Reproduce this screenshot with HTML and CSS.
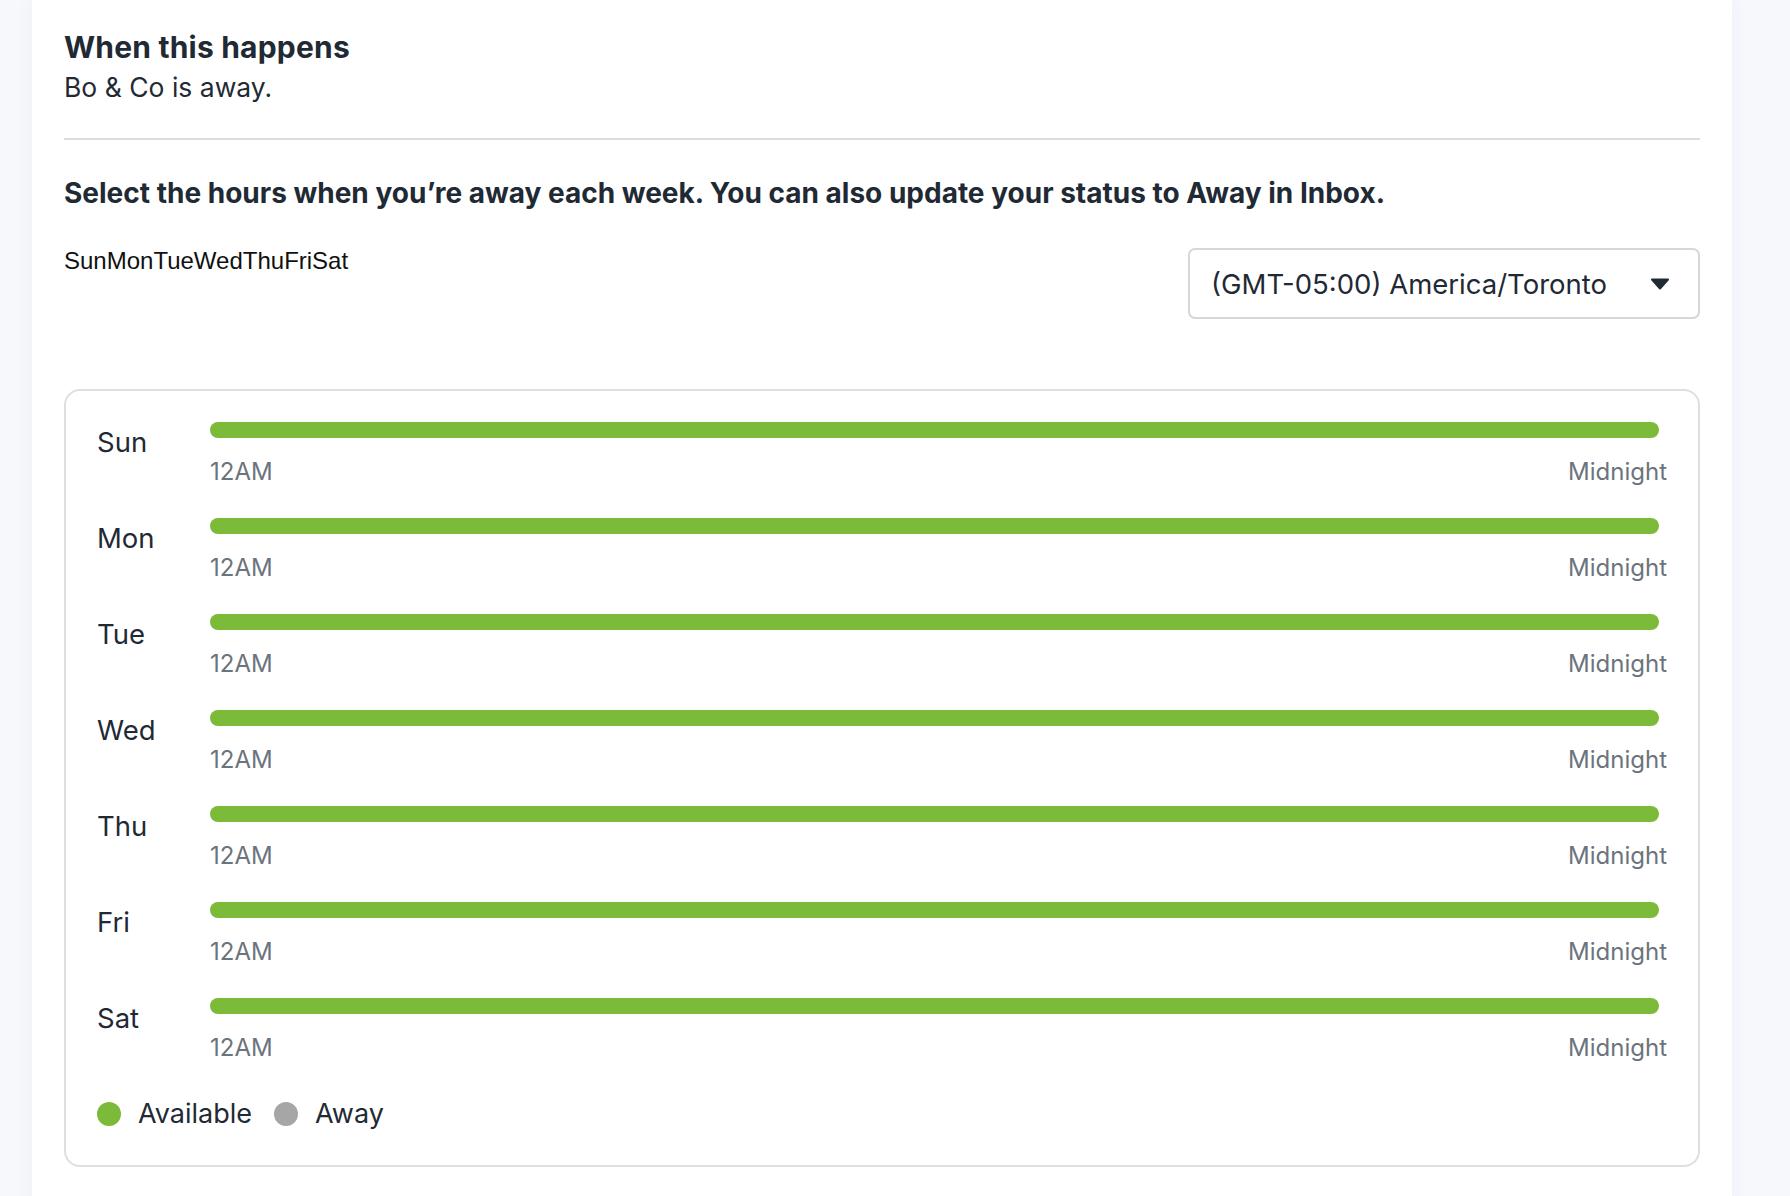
FILE: index.html
```html
<!DOCTYPE html>
<html lang="en">
<head>
<meta charset="utf-8">
<title>Away hours</title>
<link rel="stylesheet" href="styles.css">
</head>
<body>
<main class="panel">
  <section class="trigger">
    <h2 class="trigger-title">When this happens</h2>
    <p class="trigger-desc">Bo &amp; Co is away.</p>
  </section>
  <hr class="divider">
  <h3 class="hours-title">Select the hours when you’re away each week. You can also update your status to Away in Inbox.</h3>
  <div class="controls">
    <div class="day-tabs">SunMonTueWedThuFriSat</div>
    <div class="tz-select">
      <span class="tz-value">(GMT-05:00) America/Toronto</span>
      <svg class="tz-caret" width="20" height="12" viewBox="0 0 20 12"><path d="M2 1.5 H18 L10 10.5 Z" fill="#1f2a35" stroke="#1f2a35" stroke-width="2" stroke-linejoin="round"/></svg>
    </div>
  </div>
  <div class="schedule">
    <div class="day-row"><div class="day-name">Sun</div><div class="timeline"><div class="bar"></div><div class="ticks"><span>12AM</span><span>Midnight</span></div></div></div>
    <div class="day-row"><div class="day-name">Mon</div><div class="timeline"><div class="bar"></div><div class="ticks"><span>12AM</span><span>Midnight</span></div></div></div>
    <div class="day-row"><div class="day-name">Tue</div><div class="timeline"><div class="bar"></div><div class="ticks"><span>12AM</span><span>Midnight</span></div></div></div>
    <div class="day-row"><div class="day-name">Wed</div><div class="timeline"><div class="bar"></div><div class="ticks"><span>12AM</span><span>Midnight</span></div></div></div>
    <div class="day-row"><div class="day-name">Thu</div><div class="timeline"><div class="bar"></div><div class="ticks"><span>12AM</span><span>Midnight</span></div></div></div>
    <div class="day-row"><div class="day-name">Fri</div><div class="timeline"><div class="bar"></div><div class="ticks"><span>12AM</span><span>Midnight</span></div></div></div>
    <div class="day-row"><div class="day-name">Sat</div><div class="timeline"><div class="bar"></div><div class="ticks"><span>12AM</span><span>Midnight</span></div></div></div>
    <div class="legend">
      <span class="legend-item"><span class="dot dot-available"></span>Available</span>
      <span class="legend-item"><span class="dot dot-away"></span>Away</span>
    </div>
  </div>
</main>
</body>
</html>
```
FILE: styles.css
```css
* { box-sizing: border-box; }
html, body { margin: 0; padding: 0; }
body {
  background: #f6f8fc;
  font-family: Inter, "Noto Sans", sans-serif;
  color: #1f2a35;
  min-height: 100vh;
}
.panel {
  margin-left: 32px;
  width: 1700px;
  min-height: 100vh;
  background: #ffffff;
  padding: 30px 32px 40px 32px;
  box-shadow: 0 0 18px rgba(40, 60, 120, 0.05);
}
.trigger-title {
  margin: 0;
  font-size: 30px;
  line-height: 34px;
  font-weight: 700;
  letter-spacing: 0.2px;
}
.trigger-desc {
  margin: 6px 0 0 0;
  font-size: 26.5px;
  line-height: 34px;
  font-weight: 400;
}
.divider {
  margin: 34px 0 0 0;
  border: 0;
  height: 2px;
  background: #dadcdf;
}
.hours-title {
  margin: 36px 0 0 0;
  font-size: 28px;
  line-height: 34px;
  font-weight: 700;
}
.controls {
  margin-top: 37px;
  display: flex;
  justify-content: space-between;
  align-items: flex-start;
}
.day-tabs {
  font-family: "Liberation Sans", Arial, sans-serif;
  font-size: 24px;
  line-height: 28px;
  color: #111;
}
.tz-select {
  margin-top: 1px;
  width: 512px;
  height: 71px;
  border: 2px solid #d4d7dc;
  border-radius: 7px;
  display: flex;
  align-items: center;
  justify-content: space-between;
  padding: 0 28px 0 21px;
}
.tz-value {
  font-size: 27.5px;
  line-height: 32px;
}
.tz-caret { display: block; }
.schedule {
  margin-top: 70px;
  border: 2px solid #dedfe1;
  border-radius: 16px;
  padding: 31px 31px 35px 31px;
  display: flex;
  flex-direction: column;
}
.day-row {
  display: grid;
  grid-template-columns: 113px 1fr;
  margin-bottom: 32px;
}
.day-name {
  margin-top: 4px;
  font-size: 27.5px;
  line-height: 32px;
}
.timeline {
  display: flex;
  flex-direction: column;
}
.bar {
  height: 16px;
  border-radius: 8px;
  background: #7cba3a;
  margin-right: 8px;
}
.ticks {
  margin-top: 20px;
  display: flex;
  justify-content: space-between;
  font-size: 24px;
  line-height: 28px;
  color: #6b747d;
}
.legend {
  margin-top: 4px;
  display: flex;
  align-items: center;
  gap: 22px;
  font-size: 27px;
  line-height: 32px;
}
.legend-item {
  display: flex;
  align-items: center;
  gap: 17px;
}
.dot {
  width: 24px;
  height: 24px;
  border-radius: 50%;
  display: inline-block;
}
.dot-available { background: #7cba3a; }
.dot-away { background: #a6a6a6; }
```
